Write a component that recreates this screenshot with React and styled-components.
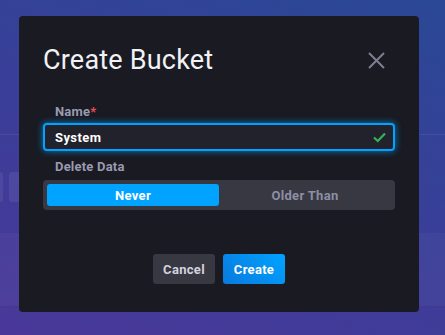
import React from 'react'
import styled, { createGlobalStyle } from 'styled-components'

const Global = createGlobalStyle`
  html, body { margin: 0; padding: 0; }
  body {
    width: 445px;
    height: 335px;
    overflow: hidden;
    font-family: Roboto, "Liberation Sans", sans-serif;
  }
`;

const Page = styled.div`
  position: relative;
  width: 445px;
  height: 335px;
  overflow: hidden;
  background: linear-gradient(20deg, #4a3899 0%, #3a3e98 50%, #2a4896 100%);
`;

const PageHeader = styled.div`
  height: 134px;
  border-bottom: 1px solid rgba(255, 255, 255, 0.07);
`;

const CardRow = styled.div`
  display: flex;
  gap: 6px;
  margin: 37px 0 0 -20px;
`;

const GhostCard = styled.div`
  width: ${p => p.w}px;
  height: 30px;
  border-radius: 3px;
  background: rgba(255, 255, 255, 0.07);
`;

const GhostPanel = styled.div`
  margin-top: 31px;
  height: 73px;
  background: rgba(255, 255, 255, 0.035);
  border-bottom: 1px solid rgba(0, 0, 0, 0.1);
`;

const Dialog = styled.div`
  position: absolute;
  left: 19px;
  top: 16px;
  width: 400px;
  height: 296px;
  box-sizing: border-box;
  border-radius: 4px;
  background: #191a22;
  padding: 0 24px;
  display: flex;
  flex-direction: column;
`;

const Header = styled.div`
  display: flex;
  align-items: center;
  justify-content: space-between;
  height: 32px;
  margin-top: 28px;
`;

const Title = styled.h2`
  margin: 0;
  font-size: 27px;
  font-weight: 400;
  color: #f1f1f6;
  letter-spacing: 0.2px;
`;

const CloseButton = styled.button`
  border: none;
  background: none;
  padding: 0;
  width: 20px;
  height: 20px;
  margin-right: 9px;
  display: flex;
  align-items: center;
  justify-content: center;
`;

const Label = styled.div`
  margin: ${p => p.top}px 0 0 12px;
  font-size: 13px;
  font-weight: 700;
  color: #9a9bb0;
  line-height: 16px;
  letter-spacing: 0.2px;
`;

const Required = styled.span`
  color: #ea4d5a;
`;

const InputBox = styled.div`
  margin-top: 3px;
  height: 28px;
  box-sizing: border-box;
  border: 2px solid #00a3ff;
  border-radius: 4px;
  background: #21222b;
  box-shadow: 0 0 6px 1px rgba(0, 163, 255, 0.55);
  display: flex;
  align-items: center;
  justify-content: space-between;
  padding: 0 7px 0 10px;
`;

const InputText = styled.span`
  font-size: 13px;
  font-weight: 700;
  color: #ffffff;
  letter-spacing: 0.4px;
`;

const Toggle = styled.div`
  margin-top: 5px;
  height: 30px;
  box-sizing: border-box;
  padding: 4px;
  border-radius: 4px;
  background: #383843;
  display: grid;
  grid-template-columns: 1fr 1fr;
`;

const ToggleOption = styled.div`
  border-radius: 3px;
  display: flex;
  align-items: center;
  justify-content: center;
  font-size: 13px;
  font-weight: 700;
  letter-spacing: 0.3px;
  background: ${p => (p.active ? '#00a3ff' : 'transparent')};
  color: ${p => (p.active ? '#ffffff' : '#8e8fa3')};
`;

const Footer = styled.div`
  margin-top: 44px;
  display: flex;
  justify-content: center;
  gap: 8px;
`;

const Button = styled.button`
  width: 62px;
  height: 30px;
  border: none;
  border-radius: 3px;
  font-family: Roboto, "Liberation Sans", sans-serif;
  font-size: 13px;
  font-weight: 700;
  letter-spacing: 0.3px;
  color: ${p => (p.primary ? '#ffffff' : '#d2d2de')};
  background: ${p =>
    p.primary ? 'linear-gradient(45deg, #0a79de 0%, #00a3ff 100%)' : '#383843'};
`;

export default function App() {
  return (
    <>
      <Global />
      <Page>
        <PageHeader />
        <CardRow>
          <GhostCard w={23} />
          <GhostCard w={120} />
        </CardRow>
        <GhostPanel />
        <Dialog>
          <Header>
            <Title>Create Bucket</Title>
            <CloseButton aria-label="Close">
              <svg width="17" height="17" viewBox="0 0 17 17">
                <path d="M1 1 L16 16 M16 1 L1 16" stroke="#7d7e92" strokeWidth="2" />
              </svg>
            </CloseButton>
          </Header>
          <Label top={28}>
            Name<Required>*</Required>
          </Label>
          <InputBox>
            <InputText>System</InputText>
            <svg width="13" height="11" viewBox="0 0 13 11">
              <path d="M1 5.5 L4.8 9 L12 1.5" stroke="#32b559" strokeWidth="2.2" fill="none" />
            </svg>
          </InputBox>
          <Label top={8}>Delete Data</Label>
          <Toggle>
            <ToggleOption active>Never</ToggleOption>
            <ToggleOption>Older Than</ToggleOption>
          </Toggle>
          <Footer>
            <Button>Cancel</Button>
            <Button primary>Create</Button>
          </Footer>
        </Dialog>
      </Page>
    </>
  )
}
